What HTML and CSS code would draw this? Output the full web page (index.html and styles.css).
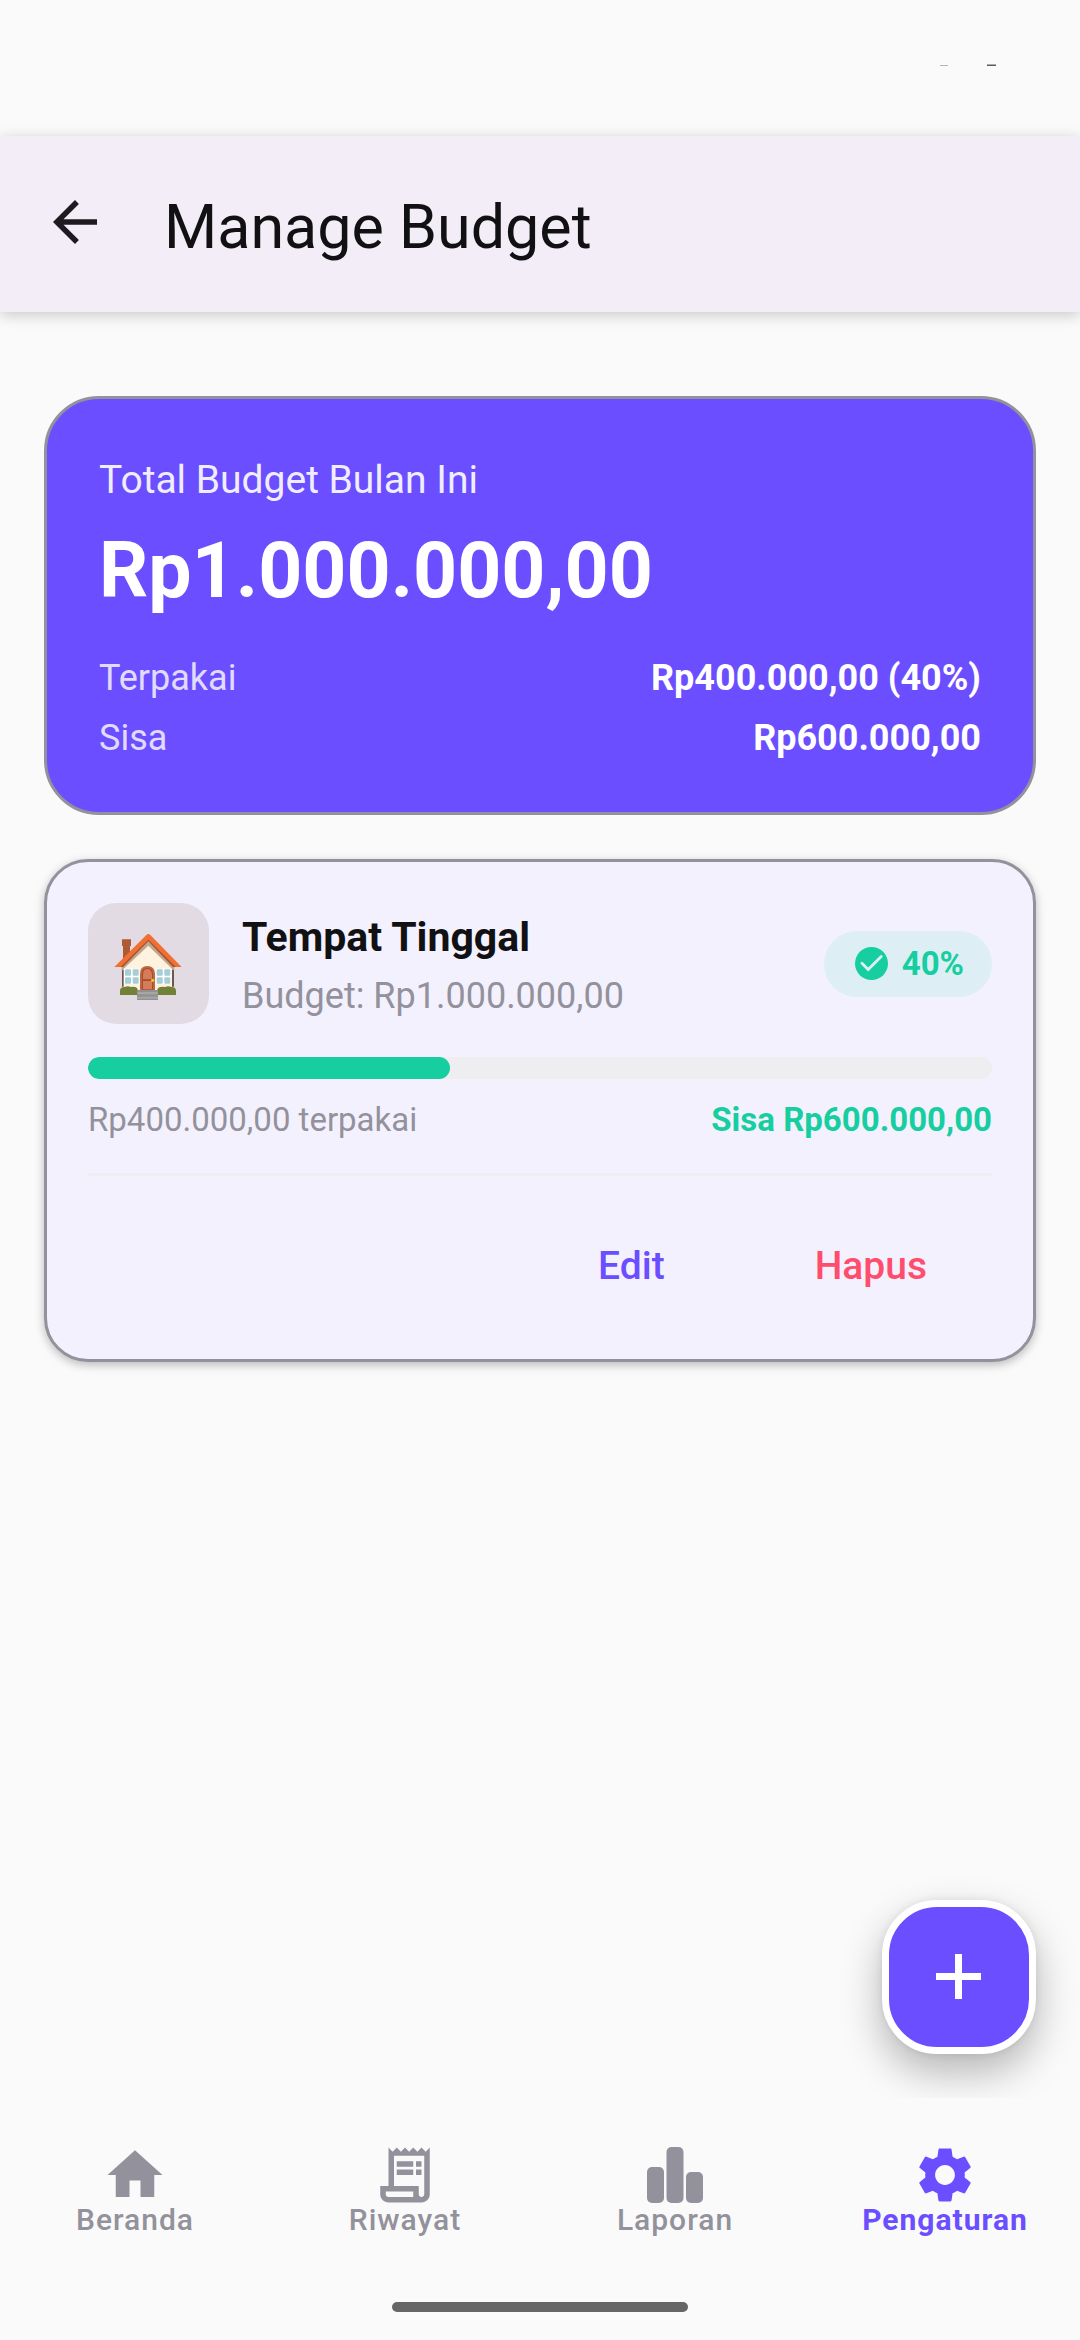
FILE: index.html
```html
<!DOCTYPE html>
<html lang="id">
<head>
  <meta charset="utf-8">
  <meta name="viewport" content="width=device-width, initial-scale=1">
  <title>Manage Budget</title>
  <link rel="stylesheet" href="styles.css">
</head>
<body>
  <div class="status-bar" aria-hidden="true">
    <svg class="status-marks" width="58" height="3" viewBox="0 0 58 3">
      <rect x="1" y="1" width="8" height="1" fill="#b4b4b4"/>
      <rect x="48" y="0" width="9" height="1" fill="#a8a8a8"/>
      <rect x="48" y="1" width="9" height="1" fill="#5c5c5c"/>
    </svg>
  </div>

  <header class="app-bar">
    <button class="back" type="button" aria-label="Kembali">
      <svg class="icon" viewBox="0 0 24 24"><path d="M20 11H7.83l5.59-5.59L12 4l-8 8 8 8 1.41-1.41L7.83 13H20z"/></svg>
    </button>
    <h1 class="title">Manage Budget</h1>
  </header>

  <main class="content">
    <section class="summary">
      <h2 class="summary-label">Total Budget Bulan Ini</h2>
      <p class="summary-total">Rp1.000.000,00</p>
      <dl class="summary-rows">
        <div class="summary-row"><dt>Terpakai</dt><dd>Rp400.000,00 (40%)</dd></div>
        <div class="summary-row"><dt>Sisa</dt><dd>Rp600.000,00</dd></div>
      </dl>
    </section>

    <article class="budget">
      <div class="budget-head">
        <div class="category">
          <svg class="category-art" viewBox="54 39 363 363" aria-hidden="true">
            <path fill="#b05a34" d="M156 148h27v20h-3v35l-21 22v-57h-3z"/>
            <path fill="#6d5550" d="M156 226h156v64H156z"/>
            <path fill="#bda88d" d="M155 230l80-82 78 82v10H155z"/>
            <path fill="#fff3e0" d="M161 236l74-69 71 69v65H161z"/>
            <path fill="#a94f2d" d="M235 143l-90 88h14l76-77 74 77h14z"/>
            <path fill="#f07033" d="M133 231l96-96q6-6 12 0l94 96h-18l-82-82-83 82z"/>
            <g fill="#fff"><path d="M162 236h46v46h-46zM257 236h46v46h-46z"/></g>
            <g fill="#a6ced6">
              <rect x="165" y="238" width="18" height="19" rx="3"/><rect x="188" y="238" width="18" height="19" rx="3"/>
              <rect x="165" y="262" width="18" height="19" rx="3"/><rect x="188" y="262" width="18" height="19" rx="3"/>
              <rect x="260" y="238" width="18" height="19" rx="3"/><rect x="283" y="238" width="18" height="19" rx="3"/>
              <rect x="260" y="262" width="18" height="19" rx="3"/><rect x="283" y="262" width="18" height="19" rx="3"/>
            </g>
            <path fill="#be6542" d="M210 300v-49q0-23 22-23t23 23v49z"/>
            <path fill="#a34c2e" d="M216 299v-46q0-19 16-19t17 19v46z"/>
            <path fill="#d47d58" d="M219 268v-14q0-17 13-17t14 17v14zM219 273h27v25h-27z"/>
            <circle cx="248" cy="271" r="5" fill="#fbc02d"/>
            <path fill="#738138" d="M150 315v-12q0-12 13-12 11-4 20 0 21-3 21 13v11zM318 315v-12q0-12-13-12-11-4-20 0-24-3-24 13v11z"/>
            <path fill="#919191" d="M201 300h63v30h-63z"/>
            <path fill="#a6a6a6" d="M203 306h60v7h-60zM201 320h63v6h-63z"/>
          </svg>
        </div>
        <div class="budget-names">
          <h2 class="budget-title">Tempat Tinggal</h2>
          <p class="budget-amount">Budget: Rp1.000.000,00</p>
        </div>
        <span class="chip">
          <svg class="chip-icon" viewBox="0 0 20 20" aria-hidden="true"><circle cx="10" cy="10" r="10" fill="#17cea0"/><path d="M4.200 9.800l3.800 3.800 7.900-7.900" fill="none" stroke="#ddeff5" stroke-width="1.700" stroke-linecap="round"/></svg>
          40%
        </span>
      </div>
      <progress class="meter" value="40" max="100" aria-label="Budget terpakai">40%</progress>
      <div class="budget-usage">
        <span>Rp400.000,00 terpakai</span>
        <strong class="budget-left">Sisa Rp600.000,00</strong>
      </div>
      <hr class="divider">
      <div class="actions">
        <button class="action" type="button">Edit</button>
        <button class="action action-danger" type="button">Hapus</button>
      </div>
    </article>

    <button class="fab" type="button" aria-label="Tambah budget">
      <svg class="icon" viewBox="0 0 66 66"><path d="M29 10h7v19h19v7H36v19h-7V36H10v-7h19z"/></svg>
    </button>
  </main>

  <footer class="bottom">
    <nav class="tabs">
      <a class="tab" href="#beranda">
        <svg class="icon" viewBox="0 0 24 24" aria-hidden="true"><path d="M10 20v-6h4v6h5v-8h3L12 3 2 12h3v8z"/></svg>
        Beranda
      </a>
      <a class="tab" href="#riwayat">
        <svg class="icon" viewBox="0 0 24 24" aria-hidden="true"><path d="M19.500 3.500 18 2l-1.500 1.500L15 2l-1.500 1.500L12 2l-1.500 1.500L9 2 7.500 3.500 6 2v14H3v3c0 1.660 1.340 3 3 3h12c1.660 0 3-1.340 3-3V2l-1.500 1.500zM15 20H6c-.55 0-1-.45-1-1v-1h10v2zm4-1c0 .55-.45 1-1 1s-1-.45-1-1v-3H8V5h11v14zM9 7h6v2H9zM16 7h2v2h-2zM9 10h6v2H9zM16 10h2v2h-2z"/></svg>
        Riwayat
      </a>
      <a class="tab" href="#laporan">
        <svg class="icon" viewBox="0 0 66 66" aria-hidden="true"><rect x="5" y="25" width="17" height="36" rx="5"/><rect x="24.500" y="5" width="17" height="56" rx="5"/><rect x="44" y="30" width="17" height="31" rx="5"/></svg>
        Laporan
      </a>
      <a class="tab tab-active" href="#pengaturan" aria-current="page">
        <svg class="icon" viewBox="0 0 24 24" aria-hidden="true"><path d="M19.140 12.940c.04-.3.06-.61.06-.94 0-.32-.02-.64-.07-.94l2.030-1.580c.18-.14.23-.41.12-.61l-1.920-3.320c-.12-.22-.37-.29-.59-.22l-2.390.96c-.5-.38-1.030-.7-1.620-.94L14.400 2.810c-.04-.24-.24-.41-.48-.41h-3.840c-.24 0-.43.17-.47.41L9.250 5.350C8.660 5.590 8.120 5.920 7.630 6.290L5.240 5.330c-.22-.08-.47 0-.59.22L2.740 8.870c-.12.21-.08.47.12.61l2.030 1.580C4.840 11.360 4.800 11.690 4.800 12s.02.64.07.94l-2.030 1.580c-.18.14-.23.41-.12.61l1.920 3.320c.12.22.37.29.59.22l2.390-.96c.5.38 1.030.7 1.620.94l.36 2.540c.05.24.24.41.48.41h3.840c.24 0 .44-.17.47-.41l.36-2.540c.59-.24 1.130-.56 1.620-.94l2.390.96c.22.08.47 0 .59-.22l1.920-3.320c.12-.22.07-.47-.12-.61zM12 15.600c-1.980 0-3.600-1.620-3.600-3.600s1.620-3.600 3.600-3.600 3.600 1.620 3.600 3.600-1.620 3.600-3.600 3.600z"/></svg>
        Pengaturan
      </a>
    </nav>
    <div class="home-indicator"></div>
  </footer>
</body>
</html>
```
FILE: styles.css
```css
* {
  box-sizing: border-box;
  margin: 0;
}

body {
  display: flex;
  flex-direction: column;
  min-height: 100vh;
  background: #fafafa;
  color: #111113;
  font-family: Roboto, "Noto Sans", sans-serif;
  font-size: 36px;
  line-height: 44px;
}

button {
  border: 0;
  background: none;
  font: inherit;
  cursor: pointer;
}

.icon {
  display: block;
  width: 66px;
  height: 66px;
  fill: currentColor;
}

.status-bar {
  display: flex;
  justify-content: flex-end;
  height: 136px;
  padding: 64px 83px 0;
}

.app-bar {
  position: relative;
  z-index: 1;
  display: flex;
  align-items: center;
  gap: 56px;
  height: 176px;
  padding: 0 42px;
  background: #f3edf8;
  box-shadow: 0 3px 14px rgba(0, 0, 0, 0.2);
}

.back {
  padding: 0;
  margin-bottom: 4px;
  color: #1d1b20;
}

.title {
  padding-top: 6px;
  font-size: 61px;
  font-weight: 400;
  line-height: 76px;
}

.content {
  position: relative;
  display: flex;
  flex: 1;
  flex-direction: column;
  gap: 44px;
  padding: 84px 44px 44px;
  overflow: hidden;
}

.summary,
.budget {
  border: 3px solid #93919b;
}

.summary {
  padding: 52px;
  border-radius: 55px;
  background: #6b4eff;
  color: #fff;
}

.summary-label {
  font-size: 39px;
  font-weight: 400;
  line-height: 58px;
  opacity: 0.9;
}

.summary-total {
  margin-top: 12px;
  font-size: 77px;
  font-weight: 700;
  line-height: 100px;
}

.summary-rows {
  display: grid;
  gap: 16px;
  margin-top: 35px;
}

.summary-row {
  display: flex;
  justify-content: space-between;
}

.summary-row dt {
  opacity: 0.8;
}

.summary-row dd {
  font-weight: 700;
}

.budget {
  padding: 41px;
  border-radius: 44px;
  background: #f4f1ff;
  box-shadow: 0 3px 10px rgba(0, 0, 0, 0.26);
}

.budget-head {
  display: flex;
  align-items: center;
  gap: 33px;
}

.category {
  width: 121px;
  height: 121px;
  border-radius: 28px;
  background: #e2dbe3;
}

.category-art {
  display: block;
  width: 100%;
  height: 100%;
}

.budget-names {
  display: grid;
  flex: 1;
  gap: 9px;
}

.budget-title {
  font-size: 41px;
  font-weight: 700;
  line-height: 56px;
}

.budget-amount {
  color: #93919b;
}

.chip {
  display: flex;
  align-items: center;
  gap: 14px;
  height: 66px;
  padding: 0 28px 0 31px;
  border-radius: 33px;
  background: #ddeff5;
  color: #17cea0;
  font-size: 33px;
  font-weight: 700;
}

.chip-icon {
  width: 33px;
  height: 33px;
}

.meter {
  display: block;
  width: 100%;
  height: 22px;
  margin-top: 33px;
  border: 0;
  border-radius: 11px;
  background: #eeeef0;
  overflow: hidden;
  appearance: none;
}

.meter::-webkit-progress-bar {
  background: #eeeef0;
}

.meter::-webkit-progress-value {
  border-radius: 11px;
  background: #17cea0;
}

.budget-usage {
  display: flex;
  justify-content: space-between;
  margin-top: 19px;
  color: #93919b;
  font-size: 33px;
}

.budget-left {
  color: #17cea0;
}

.divider {
  height: 3px;
  margin-top: 31px;
  border: 0;
  background: #eeeef0;
}

.actions {
  display: flex;
  justify-content: flex-end;
  gap: 20px;
  margin-top: 38px;
}

.action {
  height: 104px;
  padding: 0 65px;
  color: #6b4eff;
  font-size: 39px;
  font-weight: 500;
}

.action-danger {
  color: #ff4d6d;
}

.fab {
  position: absolute;
  right: 44px;
  bottom: 44px;
  display: grid;
  place-items: center;
  width: 154px;
  height: 154px;
  padding: 0;
  border: 7px solid #fff;
  border-radius: 55px;
  background: #6b4eff;
  color: #fff;
  box-shadow: 0 18px 40px rgba(0, 0, 0, 0.28), 0 0 8px rgba(0, 0, 0, 0.08);
}

.bottom {
  display: flex;
  flex-direction: column;
  align-items: center;
  gap: 70px;
  padding: 44px 0 28px;
}

.tabs {
  display: grid;
  grid-template-columns: repeat(4, 1fr);
  width: 100%;
}

.tab {
  display: flex;
  flex-direction: column;
  align-items: center;
  color: #93919b;
  font-size: 30px;
  font-weight: 500;
  letter-spacing: 1px;
  line-height: 24px;
  text-decoration: none;
}

.tab-active {
  color: #6b4eff;
  font-weight: 700;
}

.home-indicator {
  width: 296px;
  height: 10px;
  border-radius: 5px;
  background: #666;
}
```
